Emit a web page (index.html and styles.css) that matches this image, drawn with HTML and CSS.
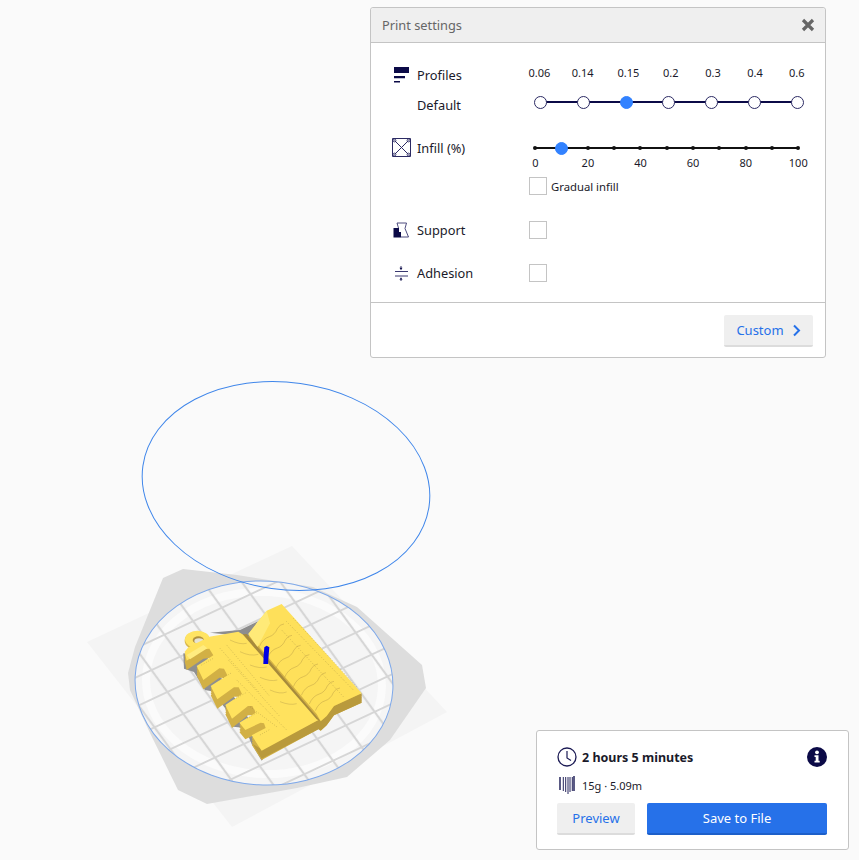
FILE: index.html
```html
<!DOCTYPE html>
<html lang="en">
<head>
    <meta charset="UTF-8">
    <meta name="viewport" content="width=device-width, initial-scale=1.0">
    <title>Print settings</title>
    <link rel="stylesheet" href="styles.css">
</head>
<body>
    <!-- 3D view -->
    <svg class="scene" width="859" height="860" viewBox="0 0 859 860">
        <defs>
            <pattern id="bed-grid" patternUnits="userSpaceOnUse" width="40" height="40" patternTransform="matrix(.7 -.375 .425 .525 162.500 715)">
                <path d="M0 20H40M20 0V40" stroke="#d6d6d6" stroke-width="2.800" fill="none"/>
            </pattern>
            <path id="wave" d="M0 0q10-24 30-30q16-5 24-24q8-14 20-14" fill="none" stroke="#ad9141" stroke-width="1.200"/>
            <path id="left-top" d="M118 140L55 172L44 185L50 212L100 178L118 176L130 196L80 228L100 270L148 235L162 236L172 256L122 288L142 328L192 292L206 292L216 312L166 345L186 386L234 348L247 348L257 368L208 398L226 420L272 398L282 400L287 414L245 436L275 482L445 390L232 142L205 125Z"/>
            <path id="right-top" d="M235 132L290 62L335 42L575 310L492 348L470 378L452 394L440 372Z"/>
        </defs>
        <polygon points="87,642 292,546 447,712 232,827" fill="#f4f4f4"/>
        <path d="M163 578L183 569L237 575L313 587L357 607L422 665L426 688L390 740L347 777L297 788L207 804L178 790L150 733L130 690L128 673L135 647Z" fill="#dddddd"/>
        <g transform="rotate(3 264 683)">
            <ellipse cx="264" cy="683" rx="129" ry="102" fill="#f5f5f5"/>
            <ellipse cx="264" cy="683" rx="118" ry="91" fill="none" stroke="#fbfbfb" stroke-width="8"/>
            <ellipse cx="264" cy="683" rx="129" ry="102" fill="url(#bed-grid)"/>
            <ellipse cx="264" cy="683" rx="129" ry="102" fill="none" stroke="#7da8ea" stroke-width="1"/>
        </g>
        <ellipse cx="286" cy="486" rx="144.500" ry="103.500" transform="rotate(8 286 486)" fill="none" stroke="#3f86ea" stroke-width="1"/>

        <!-- model, drawn in the coordinates of a 3x crop -->
        <g transform="translate(170 590) scale(.33333)">
            <polygon points="120,128 210,120 264,94 236,140" fill="#8d8d8d"/>
            <polygon points="40,190 42,236 72,246 105,300 125,304 165,354 190,410 225,414 245,462 275,512 300,480 110,200" fill="#8f8f8f"/>
            <ellipse cx="82" cy="152" rx="38" ry="28" fill="#d8b64a"/>
            <g fill="#d2b045">
                <use href="#left-top" y="7"/><use href="#left-top" y="14"/><use href="#left-top" y="21"/><use href="#left-top" y="28"/>
                <use href="#right-top" y="7"/><use href="#right-top" y="14"/><use href="#right-top" y="21"/><use href="#right-top" y="28"/>
            </g>
            <path d="M275 478L445 390L452 394L470 378L492 348L575 310L575 338L492 376L470 406L452 422L445 418L275 506L248 462Z" fill="#b99a3c"/>
            <ellipse cx="82" cy="148" rx="37" ry="26" fill="#ffe463"/>
            <ellipse cx="85" cy="150" rx="17" ry="11" fill="#b09140"/>
            <ellipse cx="87" cy="153" rx="14" ry="8" fill="#e6e3d4"/>
            <use href="#left-top" fill="#ffe25e"/>
            <use href="#right-top" fill="#fee05a"/>
            <path d="M235 132L290 62L300 100L262 172Z" fill="#ffea78"/>
            <path d="M50 195L100 165L112 175L60 208Z" fill="#ffec80"/>
            <path d="M218 133L230 132L452 394L440 388Z" fill="#a68a3c"/>
            <g>
                <use href="#wave" x="268" y="170"/>
                <use href="#wave" x="292" y="204"/>
                <use href="#wave" x="318" y="234"/>
                <use href="#wave" x="344" y="262"/>
                <use href="#wave" x="370" y="290"/>
                <use href="#wave" x="394" y="316"/>
                <use href="#wave" x="418" y="342"/>
                <use href="#wave" x="436" y="362"/>
            </g>
            <g fill="none" stroke="#7f6f38" stroke-width="1.800" stroke-dasharray="1.500 6">
                <path d="M350 95L550 300M335 120L520 320M370 85L560 290"/>
                <path d="M170 165L300 320M175 210L330 380M200 270L350 420M150 175L270 310M240 350L320 410"/>
                <path d="M95 225L130 205M148 270L182 250M192 328L228 308M232 385L262 368M270 435L300 418"/>
            </g>
            <g fill="none" stroke="#b39a4a" stroke-width="1.200">
                <path d="M180 150q30 15 50 10M210 185q30 15 55 8M240 225q30 12 50 6M270 262q30 14 52 8M300 300q30 14 50 6M330 335q30 12 50 6"/>
            </g>
            <path d="M283 172L290 167L298 172L296 195L294 222L280 222L281 195Z" fill="#0000e6"/>
        </g>
    </svg>

    <div class="panel settings-panel">
        <div class="panel-header">
            <span class="panel-title">Print settings</span>
            <svg class="close-icon" width="14" height="14" viewBox="0 0 14 14"><path d="M2 2L12 12M12 2L2 12" stroke="#666" stroke-width="3.200"/></svg>
        </div>
        <div class="settings">
            <div class="setting profiles">
                <svg class="setting-icon" width="17" height="17" viewBox="0 0 17 17">
                    <path d="M2 0H17V6H2ZM2 9H13V11.200H2ZM2 14H8V15.600H2Z" fill="#0b0a47"/>
                </svg>
                <span class="setting-name">Profiles</span>
                <div class="ticks">
                    <span>0.06</span><span>0.14</span><span>0.15</span><span>0.2</span><span>0.3</span><span>0.4</span><span>0.6</span>
                </div>
                <span class="setting-name default-name">Default</span>
                <div class="track profile-track">
                    <i class="dot"></i><i class="dot"></i><i class="dot on"></i><i class="dot"></i><i class="dot"></i><i class="dot"></i><i class="dot"></i>
                </div>
            </div>

            <div class="setting infill">
                <svg class="setting-icon infill-icon" width="19" height="19" viewBox="0 0 19 19">
                    <path d="M.5.5H18.500V18.500H.5Z M2.500 2.500L16.500 16.500M16.500 2.500L2.500 16.500" fill="none" stroke="#2b2a63" stroke-width="1"/>
                    <g fill="none" stroke="#2b2a63" stroke-width=".9"><circle cx="2.500" cy="2.500" r="1.400"/><circle cx="16.500" cy="2.500" r="1.400"/><circle cx="2.500" cy="16.500" r="1.400"/><circle cx="16.500" cy="16.500" r="1.400"/></g>
                </svg>
                <span class="setting-name">Infill (%)</span>
                <div class="infill-slider">
                    <div class="track infill-track">
                        <i class="tick"></i><i class="dot on"></i><i class="tick"></i><i class="tick"></i><i class="tick"></i><i class="tick"></i><i class="tick"></i><i class="tick"></i><i class="tick"></i><i class="tick"></i><i class="tick"></i>
                    </div>
                    <div class="infill-labels">
                        <span>0</span><span>20</span><span>40</span><span>60</span><span>80</span><span>100</span>
                    </div>
                    <label class="gradual"><i class="checkbox"></i>Gradual infill</label>
                </div>
            </div>

            <div class="setting switch">
                <svg class="setting-icon support-icon" width="16" height="16" viewBox="0 0 16 16">
                    <path d="M4 1H13.500L12 6.500L15.500 15H8" fill="none" stroke="#3a3970" stroke-width=".9"/>
                    <path d="M4 1L5.500 6" fill="none" stroke="#3a3970" stroke-width=".9"/>
                    <path d="M0.500 6H6V10H8V15.500H0.500Z" fill="#0b0a47"/>
                </svg>
                <span class="setting-name">Support</span>
                <i class="checkbox"></i>
            </div>

            <div class="setting switch">
                <svg class="setting-icon" width="17" height="16" viewBox="0 0 17 16">
                    <path d="M3 6.500H16M3 11H16" stroke="#3a3970" stroke-width="1"/>
                    <path d="M7.500 2.800H10.500L9 5.300ZM7.500 14.800H10.500L9 12.300Z M8.600 1H9.400V3H8.600ZM8.600 14.500H9.400V16H8.600Z" fill="#0b0a47"/>
                </svg>
                <span class="setting-name">Adhesion</span>
                <i class="checkbox"></i>
            </div>
        </div>
        <div class="panel-footer">
            <button class="button button-light custom-button">Custom
                <svg width="9" height="13" viewBox="0 0 9 13"><path d="M2 1.500L7 6.500L2 11.500" fill="none" stroke="#2671e9" stroke-width="2"/></svg>
            </button>
        </div>
    </div>

    <div class="panel summary-panel">
        <div class="summary-row">
            <svg width="20" height="20" viewBox="0 0 20 20">
                <circle cx="10" cy="10" r="9" fill="none" stroke="#1c1b55" stroke-width="1.300"/>
                <path d="M10 4V11L14 13.500" fill="none" stroke="#1c1b55" stroke-width="1.200"/>
            </svg>
            <span class="print-time">2 hours 5 minutes</span>
            <svg class="info-icon" width="20" height="20" viewBox="0 0 20 20">
                <circle cx="10" cy="10" r="10" fill="#0b0a47"/>
                <circle cx="10" cy="5.300" r="1.900" fill="#fff"/>
                <path d="M7.500 8.300H11.500V13.700H12.700V15.500H7.500V13.700H8.700V10.100H7.500Z" fill="#fff"/>
            </svg>
        </div>
        <div class="summary-row material-row">
            <svg width="16" height="18" viewBox="0 0 16 18">
                <path d="M1 1V14M15 0V15" fill="none" stroke="#25245c" stroke-width="1.500"/>
                <path d="M4.300 1V15M6.700 1V16M9 1V18M11 1V16M13.300 1V15" fill="none" stroke="#25245c" stroke-width="1"/>
            </svg>
            <span class="material-use">15g · 5.09m</span>
        </div>
        <div class="summary-actions">
            <button class="button button-light preview-button">Preview</button>
            <button class="button button-primary save-button">Save to File</button>
        </div>
    </div>
</body>
</html>
```

FILE: styles.css
```css
html, body {
    margin: 0;
    padding: 0;
    height: 860px;
    overflow: hidden;
}
body {
    font-family: "Noto Sans", sans-serif;
    font-size: 13px;
    color: #1a1a2a;
    background-color: #fafafa;
}
.scene {
    position: absolute;
    left: 0;
    top: 0;
}
.panel {
    position: absolute;
    background: white;
    border: 1px solid #c4c4c4;
    border-radius: 3px;
    box-sizing: border-box;
}

/* Print settings */
.settings-panel {
    left: 370px;
    top: 7px;
    width: 456px;
    height: 351px;
}
.panel-header {
    display: flex;
    align-items: center;
    justify-content: space-between;
    height: 34px;
    padding: 0 10px 0 11px;
    background-color: #efefef;
    border-bottom: 1px solid #c4c4c4;
    border-radius: 3px 3px 0 0;
}
.panel-title {
    color: #666;
    font-size: 12.8px;
}
.settings {
    padding: 22px 0 21px 21px;
}
.setting {
    display: grid;
    grid-template-columns: 25px 112px 1fr;
    align-items: center;
}
.setting-icon {
    display: block;
}
.setting-name {
    font-size: 12.8px;
    line-height: 20px;
}
.profiles {
    grid-template-rows: 20px 20px;
    row-gap: 10px;
}
.default-name {
    grid-column: 2;
}
/* the labels are not evenly spaced in the app either */
.ticks {
    display: grid;
    grid-template-columns: 42px 44.8px 46.4px 38.4px 46.2px 37.8px 45.6px;
    margin-left: -10.7px;
    margin-top: -6px;
    font-size: 11px;
    text-align: center;
}
.track {
    position: relative;
    display: flex;
    align-items: center;
    justify-content: space-between;
    box-sizing: border-box;
    height: 14px;
}
.track::before {
    content: "";
    position: absolute;
    left: 6px;
    right: 6px;
    top: 6px;
    height: 2px;
    background-color: #0b0a47;
}
.profile-track {
    width: 270px;
    margin-left: 5px;
    margin-top: -6px;
}
.dot {
    position: relative;
    display: block;
    box-sizing: border-box;
    width: 13px;
    height: 13px;
    background: white;
    border: 1.5px solid #2b2a63;
    border-radius: 50%;
}
.dot.on {
    background-color: #3282ff;
    border-color: #3282ff;
}
.infill {
    margin-top: 23px;
    align-items: start;
}
.infill-slider {
    padding-top: 3px;
}
.infill-track {
    display: grid;
    grid-template-columns: repeat(11, 26.3px);
    justify-items: center;
    margin-left: -7px;
    width: 289.300px;
}
.infill-track::before {
    left: 13px;
    right: 13px;
    background-color: #111;
}
.tick {
    position: relative;
    display: block;
    width: 4px;
    height: 4px;
    background-color: #111;
    border-radius: 50%;
}
.infill-labels {
    display: grid;
    grid-template-columns: repeat(6, 52.6px);
    margin-left: -20px;
    font-size: 11px;
    line-height: 16px;
    text-align: center;
}
.gradual {
    display: flex;
    align-items: center;
    gap: 4px;
    margin-top: 6px;
    font-size: 11.3px;
}
.checkbox {
    display: block;
    box-sizing: border-box;
    width: 18px;
    height: 18px;
    background: white;
    border: 1px solid #c4c4c4;
}
.support-icon {
    margin-left: 1px;
}
.switch {
    margin-top: 25px;
    height: 18px;
}
.panel-footer {
    display: flex;
    justify-content: flex-end;
    padding: 12px 12px 0 0;
    border-top: 1px solid #c4c4c4;
}

/* Buttons */
.button {
    display: flex;
    align-items: center;
    justify-content: center;
    box-sizing: border-box;
    height: 32px;
    padding: 0;
    border: none;
    border-radius: 2px;
    font-family: inherit;
    font-size: 13px;
    cursor: pointer;
}
.button-light {
    color: #2671e9;
    background-color: #efefef;
    border-bottom: 2px solid #dcdcdc;
}
.button-primary {
    color: white;
    background-color: #2671e9;
    border-bottom: 2px solid #1d5fc9;
}
.custom-button {
    width: 89px;
    gap: 8px;
}

/* Print summary */
.summary-panel {
    left: 536px;
    top: 730px;
    width: 313px;
    height: 120px;
    padding: 16px 21px 0 20px;
}
.summary-row {
    display: flex;
    align-items: center;
    height: 20px;
}
.print-time {
    margin-left: 5px;
    font-weight: bold;
    font-size: 12.5px;
}
.info-icon {
    margin-left: auto;
}
.material-row {
    margin-top: 8px;
    padding-left: 2px;
}
.material-use {
    margin-left: 7px;
    font-size: 11px;
}
.summary-actions {
    display: flex;
    gap: 12px;
    margin-top: 8px;
}
.preview-button {
    width: 78px;
}
.save-button {
    width: 180px;
}
```
